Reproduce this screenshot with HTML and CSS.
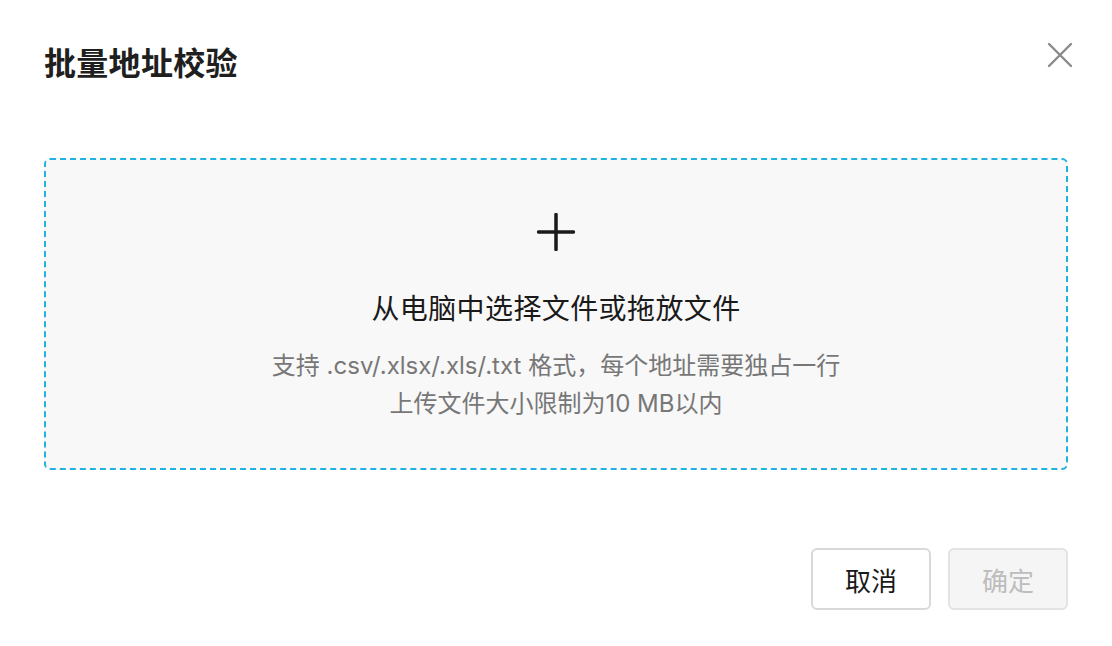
FILE: index.html
```html
<!DOCTYPE html>
<html lang="zh-CN">
<head>
<meta charset="utf-8">
<title>批量地址校验</title>
<link rel="stylesheet" href="styles.css">
</head>
<body>
<div class="modal">
  <div class="modal-header">
    <h1 class="modal-title">批量地址校验</h1>
    <button class="close-btn" aria-label="关闭">
      <svg width="26" height="26" viewBox="0 0 26 26"><path d="M2 2 L24 24 M24 2 L2 24" stroke="#8a8a8a" stroke-width="2.4" stroke-linecap="round" fill="none"/></svg>
    </button>
  </div>
  <div class="upload-area">
    <svg class="plus" width="38" height="38" viewBox="0 0 38 38"><path d="M19 1.5 V36.5 M1.5 19 H36.5" stroke="#1a1a1a" stroke-width="3.5" stroke-linecap="round" fill="none"/></svg>
    <div class="upload-main">从电脑中选择文件或拖放文件</div>
    <div class="upload-hint">支持 .csv/.xlsx/.xls/.txt 格式，每个地址需要独占一行</div>
    <div class="upload-hint">上传文件大小限制为10 MB以内</div>
  </div>
  <div class="modal-footer">
    <button class="btn btn-cancel">取消</button>
    <button class="btn btn-ok" disabled>确定</button>
  </div>
</div>
</body>
</html>
```

FILE: styles.css
```css
* { box-sizing: border-box; }
html, body {
  margin: 0;
  padding: 0;
  background: #ffffff;
}
body {
  font-family: "Liberation Sans", "Noto Sans CJK SC", sans-serif;
  color: #1f1f1f;
  width: 1112px;
  height: 646px;
  overflow: hidden;
}
.modal {
  padding: 40px 44px 36px 44px;
  display: flex;
  flex-direction: column;
}
.modal-header {
  display: flex;
  justify-content: space-between;
  align-items: flex-start;
  height: 48px;
}
.modal-title {
  margin: 0;
  font-size: 32px;
  line-height: 48px;
  font-weight: 700;
  color: #1f1f1f;
  letter-spacing: 0.3px;
}
.close-btn {
  border: none;
  background: none;
  padding: 0;
  margin: 2px -5px 0 0;
  width: 26px;
  height: 26px;
  cursor: pointer;
  display: block;
}
.close-btn svg { display: block; }
.upload-area {
  margin-top: 70px;
  height: 312px;
  border: 2px dashed #22b2df;
  border-radius: 6px;
  background: #f8f8f8;
  display: flex;
  flex-direction: column;
  align-items: center;
  padding-top: 53px;
}
.plus { display: block; }
.upload-main {
  margin-top: 39px;
  font-size: 28px;
  line-height: 40px;
  font-weight: 400;
  color: #1a1a1a;
  letter-spacing: 0.4px;
}
.upload-main + .upload-hint { margin-top: 17px; }
.upload-hint {
  font-family: "Inter", "Noto Sans CJK SC", sans-serif;
  font-size: 24px;
  line-height: 38px;
  color: #777777;
}
.modal-footer {
  margin-top: 78px;
  display: flex;
  justify-content: flex-end;
  gap: 17px;
}
.btn {
  width: 120px;
  height: 62px;
  border-radius: 6px;
  font-family: "Liberation Sans", "Noto Sans CJK SC", sans-serif;
  font-size: 26px;
  padding: 0;
  cursor: pointer;
}
.btn-cancel {
  background: #ffffff;
  border: 2px solid #d9d9d9;
  color: #1a1a1a;
}
.btn-ok {
  background: #f5f5f5;
  border: 2px solid #e3e3e3;
  color: #bdbdbd;
  cursor: not-allowed;
}
```
